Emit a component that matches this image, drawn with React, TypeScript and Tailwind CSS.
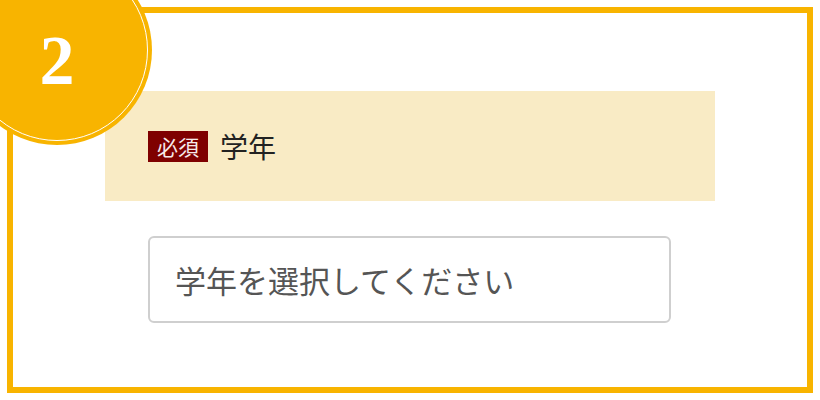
export default function App() {
  return (
    <div className="relative h-[400px] w-[820px] overflow-hidden bg-white font-['Noto_Sans_CJK_JP',sans-serif]">
      <div className="ml-[7px] mt-[7px] h-[386px] w-[806px] border-[6px] border-[#f8b400] pt-[78px]">
        <div className="mx-[92px] flex h-[110px] items-center bg-[#f9ebc5] pl-[43px]">
          <span className="flex h-[31px] w-[60px] items-center justify-center bg-[#7f0000] text-[21px] leading-none text-[#f6eaea]">
            必須
          </span>
          <span className="ml-[12px] text-[28px] leading-none text-[#222]">学年</span>
        </div>
        <div className="ml-[135px] mt-[35px] flex h-[87px] w-[523px] items-center rounded-[6px] border-2 border-[#cfcfcf] pl-[25px]">
          <span className="text-[31px] leading-none text-[#555]">学年を選択してください</span>
        </div>
      </div>

      {/* step number */}
      <div className="absolute left-[-38px] top-[-45px] h-[190px] w-[190px] rounded-full bg-[#f8b400] p-[4px]">
        <div className="flex h-full w-full items-start justify-center rounded-full border border-white pt-[66px]">
          <span className="font-['Liberation_Serif',serif] text-[70px] font-bold leading-none text-white">2</span>
        </div>
      </div>
    </div>
  )
}
